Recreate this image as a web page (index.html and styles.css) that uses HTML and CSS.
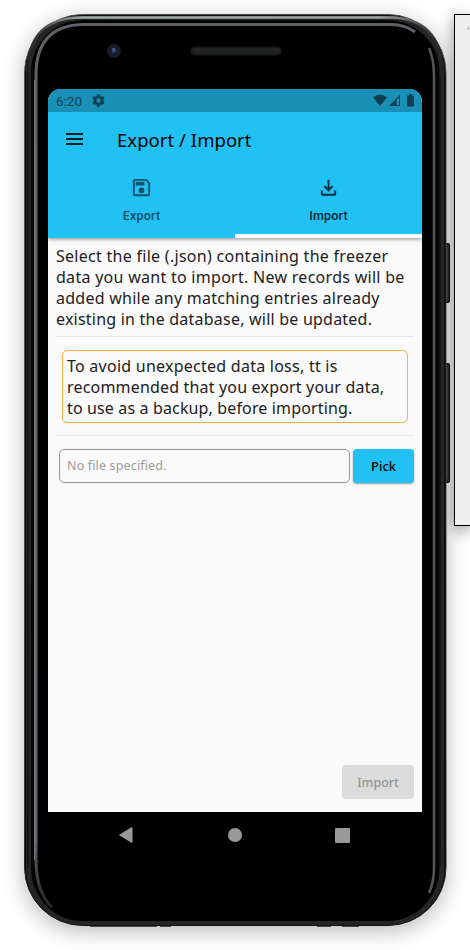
FILE: index.html
```html
<!DOCTYPE html>
<html lang="en">
<head>
<meta charset="utf-8">
<title>Export / Import</title>
<link rel="stylesheet" href="styles.css">
</head>
<body>
<aside class="panel"><svg width="14" height="28" viewBox="0 0 14 28"><path d="M12.500 13.500h1.500" stroke="#999" stroke-width="2"/></svg></aside>
<div class="phone">
  <svg class="bezel" width="430" height="914" viewBox="24 14 430 914" aria-hidden="true">
    <defs>
      <linearGradient id="rim" x1="0" y1="0" x2="0" y2="1"><stop offset="0" stop-color="#484a4a"/><stop offset=".06" stop-color="#555"/><stop offset=".5" stop-color="#505050"/><stop offset=".9" stop-color="#383838"/><stop offset="1" stop-color="#101010"/></linearGradient>
      <linearGradient id="topEdge" x1="0" y1="0" x2="1" y2="0"><stop offset="0" stop-color="#222"/><stop offset=".13" stop-color="#a4aaaa"/><stop offset=".85" stop-color="#a0a4a4"/><stop offset="1" stop-color="#222"/></linearGradient>
      <linearGradient id="glassL" x1="0" y1="0" x2="0" y2="1"><stop offset="0" stop-color="#606067"/><stop offset=".5" stop-color="#65696d"/><stop offset=".92" stop-color="#62666d"/><stop offset="1" stop-color="#22242a"/></linearGradient>
    </defs>
    <g fill="#242424" stroke="#050505">
      <rect x="444" y="243.500" width="5.500" height="59" rx="1.500"/>
      <rect x="444" y="363.500" width="5.500" height="119" rx="1.500"/>
    </g>
    <path d="M447 247v52M447 367v112" stroke="#444"/>
    <rect x="24.500" y="14.500" width="421.500" height="911" rx="58" fill="#050505" stroke="url(#rim)"/>
    <rect x="28.500" y="18" width="413.500" height="904.500" rx="54" fill="none" stroke="#252525" stroke-width="5"/>
    <path d="M27.500 72Q28 17.500 82 17.500H390Q441 18 442.500 72" fill="none" stroke="url(#topEdge)" stroke-width="2.500"/>
    <path d="M28 72V868M32.500 76V866M440 76V866M445 76V866" fill="none" stroke="#090909"/>
    <rect x="33" y="20.500" width="404" height="900.500" rx="49" fill="#000"/>
    <path d="M415 32Q405 24.500 391 24.500H84Q36 25 36 75V860Q36 892 52 907.500" fill="none" stroke="url(#glassL)" stroke-width="3"/>
    <path d="M34.500 80V860" stroke="#7a7e82"/>
    <path d="M429 48Q434 60 434 76V868Q434 882 429 893" fill="none" stroke="#55555d" stroke-width="2.500"/>
    <circle cx="114" cy="51" r="7" fill="#1d1d20"/><circle cx="114" cy="51" r="4.500" fill="#151a35"/><circle cx="114" cy="50.500" r="2.300" fill="#354779"/><circle cx="113.500" cy="49" r=".8" fill="#889"/>
    <rect x="191" y="47" width="90" height="8" rx="4" fill="#1e2020" stroke="#151515"/>
    <path d="M195 49.500H278M195 52.500H278" stroke="#2c2f2f" stroke-dasharray="1 1"/>
    <path d="M90 926.300H157M160 926.300H171M317 926.300H331M342 926.300H359" stroke="#222"/>
  </svg>
  <main class="screen">
    <header class="appbar">
      <div class="status">
        <span class="clock">6:20</span>
        <svg width="13" height="13" viewBox="2 2 20 20"><path fill="#0e4254" d="M19.140 12.940c.04-.3.060-.61.060-.94 0-.32-.02-.64-.07-.94l2.030-1.580a.49.49 0 0 0 .12-.61l-1.920-3.320a.49.49 0 0 0-.59-.22l-2.390.96c-.5-.38-1.030-.7-1.620-.94l-.36-2.540A.48.480 0 0 0 13.920 2.400h-3.840a.48.480 0 0 0-.47.410L9.250 5.350c-.59.24-1.130.57-1.620.94l-2.390-.96a.48.480 0 0 0-.59.22L2.740 8.870a.48.480 0 0 0 .12.610l2.030 1.580c-.05.3-.09.63-.09.94s.02.640.07.940l-2.030 1.580a.49.490 0 0 0-.12.610l1.920 3.320c.12.220.37.290.59.220l2.390-.96c.5.380 1.030.7 1.620.940l.36 2.540c.05.240.24.410.48.410h3.840c.24 0 .44-.17.470-.41l.36-2.540c.59-.24 1.130-.56 1.620-.94l2.390.96c.22.080.47 0 .59-.22l1.920-3.320a.48.480 0 0 0-.12-.61l-2.010-1.580zM12 15.300A3.300 3.300 0 1 1 12 8.700a3.300 3.300 0 0 1 0 6.600z"/></svg>
        <svg class="signals" width="42" height="13" viewBox="0 0 42 13"><g fill="#0c4052"><path d="M0 3.500Q7-2.500 14 3.500L7 12z"/><path d="M16 12L27 0.700V12z"/><path d="M23.800 5.800L26 3.600V11H23.800z" fill="#1d92b8"/><path d="M34 1.500h2V0h3v1.500h2V12.500h-7z"/></g></svg>
      </div>
      <div class="toolbar">
        <svg width="17" height="12" viewBox="0 0 17 12"><path d="M0 1h17M0 6h17M0 11h17" stroke="#061c24" stroke-width="2"/></svg>
        <h1>Export / Import</h1>
      </div>
      <nav class="tabs">
        <div class="tab">
          <svg width="23" height="23" viewBox="0 0 24 24" fill="#10526a"><path fill-rule="evenodd" d="M17 3H5a2 2 0 0 0-2 2v14a2 2 0 0 0 2 2h14a2 2 0 0 0 2-2V7zM19 19H5V5h11.200L19 7.800zM12 12a3 3 0 1 0 0 6 3 3 0 0 0 0-6zM6 6h9v4H6z"/></svg>
          <span>Export</span>
        </div>
        <div class="tab active">
          <svg width="23" height="23" viewBox="0 0 24 24" fill="none" stroke="#082f3d" stroke-width="2"><path d="M12 4v10M7.600 10.500L12 14.900l4.400-4.400M5 15v3.500q0 1 1 1H18q1 0 1-1V15"/></svg>
          <span>Import</span>
        </div>
      </nav>
    </header>
    <section class="content">
      <p class="copy"><span class="a1">Select the file (.json) containing the freezer</span><span class="a2">data you want to import. New records will be</span><span class="a3">added while any matching entries already</span><span class="a4">existing in the database, will be updated.</span></p>
      <hr>
      <p class="copy warning"><span class="b1">To avoid unexpected data loss, tt is</span><span class="b2">recommended that you export your data,</span><span class="b3">to use as a backup, before importing.</span></p>
      <hr>
      <div class="picker"><div class="file">No file specified.</div><button class="pick">Pick</button></div>
      <button class="import" disabled>Import</button>
    </section>
  </main>
  <nav class="sysnav">
    <svg width="14" height="16" viewBox="0 0 14 16"><path d="M13 .5V15.500L.5 8z" fill="#999" stroke="#999" stroke-linejoin="round"/></svg>
    <i class="home"></i><i class="recent"></i>
  </nav>
</div>
</body>
</html>
```

FILE: styles.css
```css
* { box-sizing: border-box; }
body { display: flow-root; margin: 0; width: 470px; height: 950px; position: relative; overflow: hidden; background: #fff; font-family: "Noto Sans", sans-serif; color: #212121; }
.panel { position: absolute; left: 454px; top: 14px; width: 16px; height: 512px; border: 1px solid #000; border-right: 0; background: #efefef; box-shadow: 0 4px 16px rgba(0,0,0,.45); overflow: hidden; }
.panel svg { display: block; }
.phone { width: 422px; height: 912px; margin: 14px 0 0 24px; padding: 75px 24px 0; border-radius: 58px; box-shadow: 0 5px 22px rgba(0,0,0,.28); }
.bezel { position: absolute; margin: -75px 0 0 -24px; display: block; }
.screen { position: relative; display: flex; flex-direction: column; width: 374px; height: 723px; border-radius: 13px 13px 0 0; background: #fafafa; overflow: hidden; }
.appbar { height: 149px; background: #22c1f4; box-shadow: 0 1px 4px rgba(0,0,0,.45); flex: none; z-index: 1; }
.status { height: 23px; padding: 0 8px 0 8px; display: flex; align-items: center; background: #1b90b7; }
.clock { width: 36px; font: 13.500px Roboto, sans-serif; color: #0d4255; }
.signals { margin-left: auto; margin-right: -1px; }
.toolbar { height: 54px; display: flex; align-items: center; padding-left: 18px; }
.toolbar h1 { margin: 1px 0 0 34px; font-size: 18.500px; line-height: 24px; font-weight: 400; color: #000; white-space: nowrap; letter-spacing: .04px; }
.tabs { height: 72px; display: grid; grid-template-columns: 1fr 1fr; }
.tab { display: flex; flex-direction: column; align-items: center; padding-top: 10px; border-bottom: 4px solid transparent; font: 500 12.500px/16px Roboto, sans-serif; color: #104e64; letter-spacing: .2px; }
.tab svg { margin-bottom: 9px; }
.tab.active { border-color: #fafafa; color: #062631; }
.content { flex: 1; display: flex; flex-direction: column; padding: 8px 8px 13px; }
.copy { margin: 0; font-size: 16px; line-height: 21px; white-space: nowrap; }
.copy span { display: block; width: max-content; }
.a1, .a2 { letter-spacing: .28px; }
.a3, .b1 { letter-spacing: .25px; }
.a4 { letter-spacing: .22px; }
.b2 { letter-spacing: .18px; }
.b3 { letter-spacing: .14px; }
hr { width: 100%; border: 0; height: 1px; margin: 6px 0 13px; background: #e7e7e7; flex: none; }
.warning { margin: 0 6px; padding: 5px 4px 3px; height: 73px; border: 1.500px solid #fbb04d; border-radius: 5px; }
.warning + hr { margin: 12px 0 13px; }
.picker { display: flex; align-items: center; gap: 3px; padding-left: 3px; height: 34px; }
.file { width: 291px; height: 34px; border: 1px solid #959595; border-radius: 5px; padding-left: 7px; font-size: 12.500px; line-height: 31px; color: #9b9b9b; letter-spacing: .15px; }
button { padding: 0; border: 0; border-radius: 4px; font: 500 13px "Noto Sans", sans-serif; height: 34px; }
.pick { width: 61px; background: #22c1f4; color: #000; box-shadow: 0 1px 2px rgba(0,0,0,.4); }
.import { width: 72px; margin: auto 0 0 auto; background: #dcdcdc; color: #949494; font-size: 12.500px; }
.sysnav { height: 46px; position: relative; display: flex; align-items: center; justify-content: space-between; padding: 0 72px 0 71px; }
.home { width: 14px; height: 14px; border-radius: 50%; background: #999; position: relative; left: 1px; }
.recent { width: 15px; height: 15px; border-radius: 1px; background: #999; }
```
